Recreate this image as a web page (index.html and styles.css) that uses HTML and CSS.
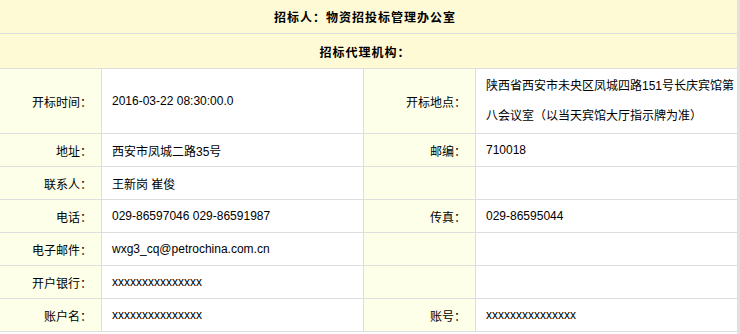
FILE: index.html
```html
<!DOCTYPE html>
<html lang="zh-CN">
<head>
<meta charset="utf-8">
<title>招标信息</title>
<link rel="stylesheet" href="styles.css">
</head>
<body>
<div class="page">
  <div class="sheet">
    <div class="head h1">招标人：物资招投标管理办公室</div>
    <div class="head h2">招标代理机构：</div>

    <div class="label">开标时间：</div>
    <div class="value">2016-03-22 08:30:00.0</div>
    <div class="label">开标地点：</div>
    <div class="value multi">陕西省西安市未央区凤城四路151号长庆宾馆第<br>八会议室（以当天宾馆大厅指示牌为准）</div>

    <div class="label">地址：</div>
    <div class="value">西安市凤城二路35号</div>
    <div class="label">邮编：</div>
    <div class="value">710018</div>

    <div class="label">联系人：</div>
    <div class="value">王新岗 崔俊</div>
    <div class="label"></div>
    <div class="value"></div>

    <div class="label">电话：</div>
    <div class="value">029-86597046 029-86591987</div>
    <div class="label">传真：</div>
    <div class="value">029-86595044</div>

    <div class="label">电子邮件：</div>
    <div class="value">wxg3_cq@petrochina.com.cn</div>
    <div class="label"></div>
    <div class="value"></div>

    <div class="label">开户银行：</div>
    <div class="value">xxxxxxxxxxxxxxx</div>
    <div class="label"></div>
    <div class="value"></div>

    <div class="label">账户名：</div>
    <div class="value">xxxxxxxxxxxxxxx</div>
    <div class="label">账号：</div>
    <div class="value">xxxxxxxxxxxxxxx</div>
  </div>
</div>
</body>
</html>
```

FILE: styles.css
```css
html, body {
  margin: 0;
  padding: 0;
  background: #ffffff;
}

body {
  font-family: "Liberation Sans", "Noto Sans CJK SC", sans-serif;
  font-size: 12px;
  color: #000000;
}

.page {
  width: 737px;
  min-height: 334px;
  border-right: 3px solid #e0e0e0;
}

.sheet {
  display: grid;
  grid-template-columns: 101px 261px 111px 261px;
  grid-template-rows: 33px 34px 64px repeat(6, 32px);
  gap: 1px;
  background: #dedede;
  border-bottom: 1px solid #dedede;
}

.head {
  grid-column: 1 / -1;
  background: #fffad6;
  display: flex;
  align-items: center;
  justify-content: center;
  padding-right: 7px;
  font-weight: bold;
  letter-spacing: 1px;
}

.label {
  background: #fdffe9;
  display: flex;
  align-items: center;
  justify-content: flex-end;
  padding-right: 9px;
  white-space: nowrap;
}

.value {
  background: #ffffff;
  display: flex;
  align-items: center;
  padding-left: 10px;
  white-space: nowrap;
}

.multi {
  display: block;
  line-height: 30px;
  padding-top: 2px;
}
```
